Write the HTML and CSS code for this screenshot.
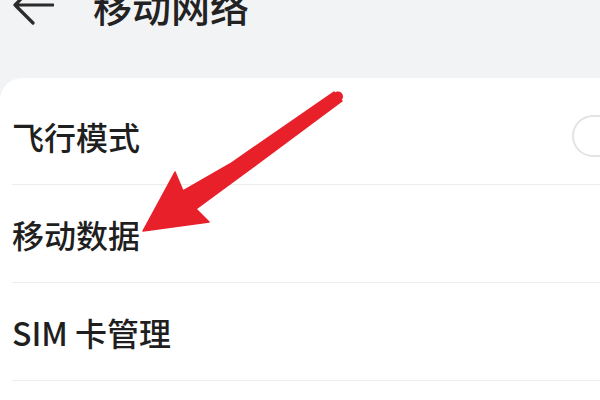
FILE: index.html
```html
<!DOCTYPE html>
<html lang="zh-CN">
<head>
    <meta charset="UTF-8">
    <meta name="viewport" content="width=device-width, initial-scale=1.0">
    <title>移动网络</title>
    <link rel="stylesheet" href="styles.css">
</head>
<body>

<div class="screen">
    <header class="topbar">
        <svg class="back" width="42" height="40" viewBox="0 0 42 40">
            <path d="M41 20 H3 M21 2 L3 20 L21 38" fill="none" stroke="#2b2b2b" stroke-width="3.2" stroke-linecap="round" stroke-linejoin="round"/>
        </svg>
        <h1 class="title">移动网络</h1>
    </header>

    <section class="card">
        <div class="row">
            <span class="label">飞行模式</span>
            <span class="switch"></span>
        </div>
        <div class="row">
            <span class="label">移动数据</span>
        </div>
        <div class="row">
            <span class="label">SIM 卡管理</span>
        </div>
    </section>

    <!-- красная стрелка поверх списка -->
    <svg class="pointer" width="600" height="400" viewBox="0 0 600 400">
        <polygon points="143,231 175,172 183,191 230,164 334,92 342,101 230,184 196,209 209,222" fill="#e8202a" stroke="#e8202a" stroke-width="1.5" stroke-linejoin="round"/>
        <circle cx="338" cy="96.5" r="5" fill="#e8202a"/>
    </svg>
</div>

</body>
</html>
```

FILE: styles.css
```css
body {
    margin: 0;
    padding: 0;
    background-color: #f2f3f5;
    font-family: "Noto Sans CJK SC", "Noto Sans", sans-serif;
    color: #1f1f1f;
    overflow: hidden;
}
.screen {
    position: relative;
    width: 600px;
    height: 400px;
    overflow: hidden;
}
.topbar {
    height: 78px;
    display: flex;
    align-items: flex-start;
    background-color: #f2f3f5;
}
.back {
    margin-top: -15px;
    margin-left: 12px;
    flex: none;
}
.title {
    margin: -14px 0 0 39px;
    font-size: 39px;
    line-height: 1;
    font-weight: 500;
    color: #222;
}
.card {
    background-color: #fff;
    border-radius: 22px 0 0 0;
    padding: 9px 0 0 12px;
    height: 313px;
}
.row {
    height: 97px;
    border-bottom: 1px solid #ececec;
    display: flex;
    align-items: center;
    justify-content: space-between;
}
.label {
    font-size: 32px;
    line-height: 1;
    font-weight: 500;
}
.switch {
    width: 76px;
    height: 38px;
    border: 2px solid #e3e3e3;
    border-radius: 21px;
    margin-right: -52px;
    background-color: #fff;
}
.pointer {
    position: absolute;
    left: 0;
    top: 0;
}
```
